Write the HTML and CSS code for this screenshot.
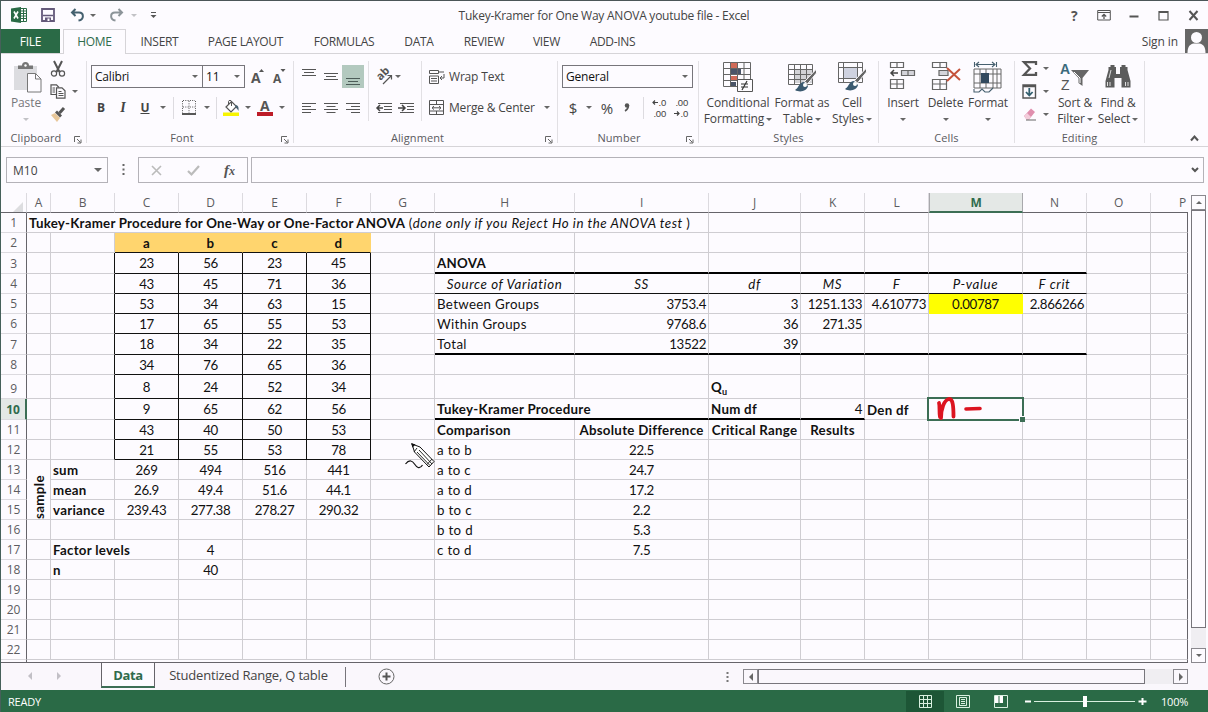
FILE: index.html
```html
<!DOCTYPE html>
<html lang="en">
<head>
<meta charset="utf-8">
<title>Tukey-Kramer for One Way ANOVA youtube file - Excel</title>
<link rel="stylesheet" href="styles.css">
</head>
<body>
<div class="app">
  <header class="titlebar">
    <div class="qat">
      <svg class="logo" width="16" height="16" viewBox="0 0 16 16"><path d="M9 1.5h6.5v13H9z" fill="#fff" stroke="#2a6a46"/><path d="M10 4h5M10 6.5h5M10 9h5M10 11.500h5M12.500 2v12" stroke="#2a6a46"/><path d="M0 1.500 10 0v16L0 14.500z" fill="#2a6a46"/><path d="m3 4.500 4 7m0-7-4 7" stroke="#fff" stroke-width="1.600"/></svg>
      <svg class="save" width="14" height="14" viewBox="0 0 14 14"><path d="M1 1h12v12H1z" fill="none" stroke="#64597a" stroke-width="1.800"/><path d="M2 7.500h10" stroke="#64597a" stroke-width="1.500"/><path d="M4 9.500h6V13H4z" fill="#64597a"/><path d="M6.500 10.500h2V13h-2z" fill="#fff"/></svg>
      <svg class="undo" width="15" height="14" viewBox="0 0 15 14"><path d="M5.500 1 2 4.500 5.500 8M2 4.500h7c5 0 5.500 7-.5 8" fill="none" stroke="#44606f" stroke-width="2"/></svg>
      <i class="caret"></i>
      <svg class="redo" width="15" height="14" viewBox="0 0 15 14"><path d="M9.500 1 13 4.500 9.500 8M13 4.500H6c-5 0-5.500 7 .5 8" fill="none" stroke="#8c9499" stroke-width="2"/></svg>
      <i class="caret pale"></i>
      <svg class="more" width="7" height="8" viewBox="0 0 7 8"><path d="M1 1.500h5" stroke="#555"/><path d="M.5 4h6l-3 3z" fill="#555"/></svg>
    </div>
    <div class="doc">Tukey-Kramer for One Way ANOVA youtube file - Excel</div>
    <div class="win">
      <b class="help">?</b>
      <svg width="14" height="12" viewBox="0 0 14 12"><path d="M.7 1.500h12.600v9.500H.7zM1 3.500h12" fill="none" stroke="#555"/><path d="M7 10V5.500M4.800 7.500 7 5.300l2.200 2.200" fill="none" stroke="#555" stroke-width="1.300"/></svg>
      <svg width="10" height="12" viewBox="0 0 10 12"><path d="M.5 7.500h9" stroke="#555" stroke-width="2"/></svg>
      <svg width="11" height="11" viewBox="0 0 11 11"><path d="M1 1.500h9v8.500H1zM1 2.500h9" fill="none" stroke="#555" stroke-width="1.200"/></svg>
      <svg width="11" height="11" viewBox="0 0 11 11"><path d="m1.500 1 8 9m0-9-8 9" stroke="#555" stroke-width="2"/></svg>
    </div>
  </header>

  <nav class="tabs">
    <span class="file">FILE</span><span class="on">HOME</span><span class="t-ins">INSERT</span><span class="t-page">PAGE LAYOUT</span><span class="t-form">FORMULAS</span><span class="t-data">DATA</span><span class="t-rev">REVIEW</span><span class="t-view">VIEW</span><span class="t-add">ADD-INS</span>
    <span class="signin">Sign in</span>
    <svg class="avatar" width="23" height="24" viewBox="0 0 23 24"><path d="M0 0h23v24H0z" fill="#666"/><circle cx="11.500" cy="8.500" r="5.500" fill="#fdfbff"/><path d="M2.500 24c0-7 3-9 6-9.500h6c3 .5 6 2.500 6 9.500z" fill="#fdfbff"/></svg>
  </nav>

  <section class="ribbon">
    <div class="group g-clip">
      <div class="body">
        <div class="big paste">
          <svg width="30" height="32" viewBox="0 0 30 32"><path d="M1 4h23v24H1z" fill="#dcdce0"/><path d="M5 7h15V3.500h-4a3.500 3.500 0 0 0-7 0H5z" fill="#777"/><circle cx="12.500" cy="3.500" r="1.200" fill="#fff"/><path d="M14.500 11.500h8l5.500 5.500v13H14.500z" fill="#fdfbff" stroke="#777"/><path d="M22.500 11.500V17H28" fill="none" stroke="#777"/></svg>
          <span class="muted">Paste</span><i class="caret pale"></i>
        </div>
        <div class="small-col">
          <div><svg width="16" height="16" viewBox="0 0 16 16"><path d="m4 0 5.500 11M12 0 6.500 11" stroke="#555" stroke-width="2"/><circle cx="4" cy="12.500" r="2.600" fill="none" stroke="#555" stroke-width="1.200"/><circle cx="12" cy="12.500" r="2.600" fill="none" stroke="#555" stroke-width="1.200"/></svg></div>
          <div><svg width="16" height="15" viewBox="0 0 16 15"><path d="M6 10.500H1V.8h5.500L9 3.500" fill="none" stroke="#555" stroke-width="1.200"/><path d="M6.500 3.800h5.500l3 3v7.400H6.500z" fill="#fdfbff" stroke="#555" stroke-width="1.200"/><path d="M2.500 4H5M2.500 6H5M2.500 8H5M8.500 7.500h3M8.500 9.500h5M8.500 11.500h5" stroke="#555"/></svg><i class="caret"></i></div>
          <div><svg width="16" height="16" viewBox="0 0 16 16"><path d="m1 8 4-2 5 5-3 4z" fill="#e8c79a"/><path d="m5 5.500 2-2 5 5-2 2z" fill="#555"/><path d="m9.500 6 4.500-5" stroke="#555" stroke-width="3"/></svg></div>
        </div>
      </div>
      <div class="label"><span>Clipboard</span><svg class="launch" width="8" height="8" viewBox="0 0 8 8"><path d="M.5 6V.5H6M3 3l3.500 3.500M7 3.500V7H3.500" fill="none" stroke="#666"/></svg></div>
    </div>

    <div class="group g-font">
      <div class="body rows">
        <div class="row"><div class="combo c-name"><span>Calibri</span><i class="caret"></i></div><div class="combo c-size"><span>11</span><i class="caret"></i></div>
          <svg class="grow" width="16" height="18" viewBox="0 0 16 18"><text x="0" y="15" class="gl">A</text><path d="m8 4 2.500-3L13 4z" fill="#555"/></svg>
          <svg class="shrink" width="16" height="18" viewBox="0 0 16 18"><text x="1" y="15" class="gs">A</text><path d="m8.500 1 2.500 3 2.500-3z" fill="#555"/></svg>
        </div>
        <div class="row">
          <b class="w22 bold">B</b><b class="w22 ital">I</b><b class="w22 und">U</b><span class="w14"><i class="caret"></i></span><i class="sep"></i>
          <span class="w26"><svg width="14" height="15" viewBox="0 0 14 15"><path d="M1 .5h12M1 7h12M.5 1v12M7 1v12M13.500 1v12" stroke="#555" stroke-dasharray="1 1.300"/><path d="M0 14h14" stroke="#444" stroke-width="1.800"/></svg></span>
          <span class="w10"><i class="caret"></i></span><i class="sep s2"></i>
          <span class="w24"><svg width="17" height="16" viewBox="0 0 17 16"><path d="M0 12.500h16V16H0z" fill="#f7f400"/><path d="m3 7 5.500-5.500 5 5L8 12z" fill="#fff" stroke="#555" stroke-width="1.200"/><path d="M5.500 4V1.500c0-1.500 3-1.500 3 0V6" fill="none" stroke="#555"/><path d="M12 5c3 0 4 2 3.500 6-1-2-2-3-3-3.500z" fill="#47606f"/></svg></span>
          <span class="w10"><i class="caret"></i></span>
          <span class="w24"><svg width="17" height="16" viewBox="0 0 17 16"><text x="3" y="11" class="gl">A</text><path d="M0 12h16v4H0z" fill="#bd1c28"/></svg></span>
          <span class="w10"><i class="caret"></i></span>
        </div>
      </div>
      <div class="label"><span>Font</span><svg class="launch" width="8" height="8" viewBox="0 0 8 8"><path d="M.5 6V.5H6M3 3l3.500 3.500M7 3.500V7H3.500" fill="none" stroke="#666"/></svg></div>
    </div>

    <div class="group g-align">
      <div class="body">
        <div class="al-left">
          <div class="row">
            <span class="w22"><svg width="14" height="22" viewBox="0 0 14 22"><path d="M0 3.500h14M2 6.500h10M0 9.500h14" stroke="#555"/></svg></span>
            <span class="w22"><svg width="14" height="22" viewBox="0 0 14 22"><path d="M0 7.500h14M2 10.500h10M0 13.500h14" stroke="#555"/></svg></span>
            <span class="w22 active"><svg width="14" height="22" viewBox="0 0 14 22"><path d="M0 12.500h14M2 15.500h10M0 18.500h14" stroke="#4c5c58"/></svg></span>
          </div>
          <div class="row">
            <span class="w22"><svg width="14" height="12" viewBox="0 0 14 12"><path d="M0 1.500h14M0 4.500h9M0 7.500h14M0 10.500h9" stroke="#555"/></svg></span>
            <span class="w22"><svg width="14" height="12" viewBox="0 0 14 12"><path d="M0 1.500h14M2.500 4.500h9M0 7.500h14M2.500 10.500h9" stroke="#555"/></svg></span>
            <span class="w22"><svg width="14" height="12" viewBox="0 0 14 12"><path d="M0 1.500h14M5 4.500h9M0 7.500h14M5 10.500h9" stroke="#555"/></svg></span>
          </div>
        </div>
        <div class="al-mid">
          <div class="row">
            <svg width="16" height="18" viewBox="0 0 16 18"><text class="ab" transform="translate(4.500 13) rotate(-45)">ab</text><path d="m7 16 8-8M11.500 7.500h4v4" fill="none" stroke="#555" stroke-width="1.200"/></svg><i class="caret"></i>
          </div>
          <div class="row in">
            <svg width="16" height="12" viewBox="0 0 16 12"><path d="M2 1.500h14M8 4.500h8M8 7.500h8M2 10.500h14" stroke="#555"/><path d="M7 6H1.500M4 3 1 6l3 3" fill="none" stroke="#444" stroke-width="1.500"/></svg>
            <svg width="16" height="12" viewBox="0 0 16 12"><path d="M2 1.500h14M9 4.500h7M9 7.500h7M2 10.500h14" stroke="#555"/><path d="M0 6h6.500M4 3l3 3-3 3" fill="none" stroke="#444" stroke-width="1.500"/></svg>
          </div>
        </div>
        <div class="al-right">
          <div class="row"><svg width="16" height="16" viewBox="0 0 16 16"><path d="M.5 1.500h9v3h-9zM10 3h5M.5 7h9v7.500h-9zM2 9.500h6M2 12h6M15 5v4h-3.500M13 7l-2 2 2 2" fill="none" stroke="#555"/></svg><span>Wrap Text</span></div>
          <div class="row"><svg width="16" height="16" viewBox="0 0 16 16"><path d="M.5.500h14v14H.5zM.5 4.500h14M.5 11h14M7.500.500v4M7.500 11v3.500M3 7.800h9M5 6 3 7.800l2 1.800M10 6l2 1.800-2 1.800" fill="none" stroke="#555"/></svg><span class="merge">Merge &amp; Center</span><i class="caret"></i></div>
        </div>
      </div>
      <div class="label"><span>Alignment</span><svg class="launch" width="8" height="8" viewBox="0 0 8 8"><path d="M.5 6V.5H6M3 3l3.500 3.500M7 3.500V7H3.500" fill="none" stroke="#666"/></svg></div>
    </div>

    <div class="group g-num">
      <div class="body rows">
        <div class="row"><div class="combo c-num"><span>General</span><i class="caret"></i></div></div>
        <div class="row">
          <span class="w22 sym">$</span><span class="w10"><i class="caret"></i></span><span class="w26 sym">%</span><span class="w14"><svg width="6" height="9" viewBox="0 0 6 9"><circle cx="3" cy="2.500" r="2.200" fill="#555"/><path d="M4.500 2.500C4.500 5 3.500 6.500 1 8" fill="none" stroke="#555" stroke-width="1.500"/></svg></span><i class="sep s3"></i>
          <span class="dec"><span><svg width="6" height="5" viewBox="0 0 6 5"><path d="M6 2.500H1M3 .5l-2 2 2 2" fill="none" stroke="#444" stroke-width="1.200"/></svg>.0</span><span>.00</span></span><span class="dec"><span>.00</span><span><svg width="6" height="5" viewBox="0 0 6 5"><path d="M0 2.500h5M3 .5l2 2-2 2" fill="none" stroke="#444" stroke-width="1.200"/></svg>.0</span></span>
        </div>
      </div>
      <div class="label"><span>Number</span><svg class="launch" width="8" height="8" viewBox="0 0 8 8"><path d="M.5 6V.5H6M3 3l3.500 3.500M7 3.500V7H3.500" fill="none" stroke="#666"/></svg></div>
    </div>

    <div class="group g-styles">
      <div class="body">
        <div class="big b-cond">
          <svg width="30" height="32" viewBox="0 0 30 32"><path d="M8 1h6v5H8zM8 14h7v5H8z" fill="#d06a58"/><path d="M8 7h10v6H8zM8 20h5v5H8z" fill="#4a5468"/><path d="M.5.500h27v24H.5zM.5 6.500h27M.5 12.500h27M.5 18.500h27M7.500.500v24M14.500.500v24M21 .5v24" fill="none" stroke="#666"/><path d="M14.500 17.500h15v12h-15z" fill="#fdfbff" stroke="#555"/><path d="M18 22h7M18 25h7M24 19l-5 9" stroke="#333" stroke-width="1.200"/></svg>
          <span>Conditional</span><span>Formatting <i class="caret"></i></span>
        </div>
        <div class="big b-fmt">
          <svg width="30" height="32" viewBox="0 0 30 32"><path d="M8 8h17v13H8z" fill="#d2d2d6"/><path d="M1.500 2.500h24v20h-24zM1.500 7.500h24M1.500 12.500h24M1.500 17.500h24M7.500 2.500v20M13.500 2.500v20M19.500 2.500v20" fill="none" stroke="#666"/><path d="m29.500 7-12 12.500 3 2.500 9-11z" fill="#666" stroke="#fdfbff"/><path d="M17 20c-5 0-5 6-9 8 5 3 12 1 13-4z" fill="#3b5a70"/><circle cx="18" cy="23" r="2" fill="#fff"/></svg>
          <span>Format as</span><span>Table <i class="caret"></i></span>
        </div>
        <div class="big b-cell">
          <svg width="30" height="32" viewBox="0 0 30 32"><path d="M6 6h14v10H6z" fill="#cfd2e0"/><path d="M1.500.500h24v20h-24zM1.500 5.500h24M1.500 16.500h24M6.500.500v20M20.500.500v20" fill="none" stroke="#666"/><path d="m29.500 6-12 12.500 3 2.500 9-11z" fill="#666" stroke="#fdfbff"/><path d="M17 19c-5 0-5 6-9 8 5 3 12 1 13-4z" fill="#3b5a70"/><circle cx="18" cy="22" r="2" fill="#fff"/></svg>
          <span>Cell</span><span>Styles <i class="caret"></i></span>
        </div>
      </div>
      <div class="label"><span>Styles</span></div>
    </div>

    <div class="group g-cells">
      <div class="body">
        <div class="big b-ins">
          <svg width="30" height="32" viewBox="0 0 30 32"><path d="M13 9h13v5H13z" fill="#d4d4da"/><path d="M2.500.500h13v5h-13zM9 .5v5M13.500 8.500h13v5h-13zM20 8.500v5M2.500 17.500h13v9h-13zM9 17.500v9M2.500 22h13" fill="none" stroke="#666" stroke-width="1.200"/><path d="M10 11H3.500M6 8l-3 3 3 3" fill="none" stroke="#444" stroke-width="1.500"/></svg>
          <span>Insert</span><i class="caret"></i>
        </div>
        <div class="big b-del">
          <svg width="30" height="32" viewBox="0 0 30 32"><path d="M8 9h9v5H8z" fill="#d4d4da"/><path d="M1.500.500h14v5h-14zM9 .5v5M8 8.500h9v5H8zM1.500 17.500h14v10h-14zM9 17.500v10M1.500 22h14" fill="none" stroke="#666" stroke-width="1.200"/><path d="m16 6 13 12M29 7 16 19" stroke="#c5533c" stroke-width="2"/></svg>
          <span>Delete</span><i class="caret"></i>
        </div>
        <div class="big b-format">
          <svg width="30" height="32" viewBox="0 0 30 32"><path d="M1 7h27v19H1zM1 12h27M1 21h27M7 7v19M20 7v19M24 7v19M13 7v19" fill="none" stroke="#666"/><path d="M8 11h8v10H8z" fill="#33495e"/><path d="M1.500 0v5M23.500 0v5M3 2.500h19M6 0 3 2.500 6 5M19 0l3 2.500L19 5M1 27v3h5l3-3 3 3h4l4-4" fill="none" stroke="#47606f" stroke-width="1.100"/></svg>
          <span>Format</span><i class="caret"></i>
        </div>
      </div>
      <div class="label"><span>Cells</span></div>
    </div>

    <div class="group g-edit">
      <div class="body">
        <div class="small-col ed">
          <div><svg width="15" height="15" viewBox="0 0 15 15"><path d="M14 4V1.200H2L8 7.500 2 13.800h12V11" fill="none" stroke="#555" stroke-width="2.300"/></svg><i class="caret"></i></div>
          <div><svg width="15" height="15" viewBox="0 0 15 15"><path d="M1 1h12.500v13H1zM1 2.500h12.500" fill="none" stroke="#555" stroke-width="1.400"/><path d="M7.300 4v7M4 8l3.300 3.500L10.600 8" fill="none" stroke="#33606f" stroke-width="1.800"/></svg><i class="caret"></i></div>
          <div><svg width="15" height="15" viewBox="0 0 15 15"><path d="m2 9 7-7.500 4 3.500-6 7.500H4.500z" fill="#e08fae"/><path d="m2 9 3-3 4 4-2 2.500H4.500z" fill="#f3cddb"/><path d="M4 13h10" stroke="#666"/></svg><i class="caret"></i></div>
        </div>
        <div class="big b-sort">
          <svg width="30" height="32" viewBox="0 0 30 32"><text x="0" y="12" class="sa">A</text><text x="1" y="28" class="sz">Z</text><path d="M11 8h18l-6.500 8v8l-4-3v-5z" fill="#666"/><path d="m14 10 6 6v5" fill="none" stroke="#fff"/></svg>
          <span>Sort &amp;</span><span>Filter <i class="caret"></i></span>
        </div>
        <div class="big b-find">
          <svg width="30" height="32" viewBox="0 0 30 32"><path d="M5.500 8V5h2V3h4v2h1.500v7h4V5h1.500V3h4v2h2v3l3 11v6.500h-9V16h-7v9.500h-9V19z" fill="#5c5c5c"/><path d="M4.500 20v4M7 20v4M22.500 20v4M25 20v4M8 8l-2 8" stroke="#fff" stroke-width=".8"/></svg>
          <span>Find &amp;</span><span>Select <i class="caret"></i></span>
        </div>
      </div>
      <div class="label"><span>Editing</span></div>
    </div>
    <svg class="collapse" width="9" height="7" viewBox="0 0 9 7"><path d="m1 5.500 3.500-4 3.500 4" fill="none" stroke="#555" stroke-width="2"/></svg>
  </section>

  <section class="fbar">
    <div class="namebox"><span>M10</span><i class="caret"></i></div>
    <svg class="dots" width="3" height="14" viewBox="0 0 3 14"><path d="M1.500 1v12" stroke="#666" stroke-width="2" stroke-dasharray="2 2.500"/></svg>
    <div class="fx">
      <svg width="11" height="11" viewBox="0 0 11 11"><path d="m1 1 9 9m0-9-9 9" stroke="#bbb" stroke-width="1.600"/></svg>
      <svg width="13" height="11" viewBox="0 0 13 11"><path d="m1 6 3.500 3.500L12 1" fill="none" stroke="#bbb" stroke-width="2.200"/></svg>
      <span class="fn">f<small>x</small></span>
    </div>
    <div class="formula"><svg width="8" height="6" viewBox="0 0 8 6"><path d="m1 1 3 3 3-3" fill="none" stroke="#555" stroke-width="2"/></svg></div>
  </section>

  <main class="work">
    <div class="sheet">
      <table>
        <colgroup><col class="k26"><col class="k24"><col class="k64"><col class="k64"><col class="k64"><col class="k64"><col class="k64"><col class="k64"><col class="k140"><col class="k134"><col class="k92"><col class="k64"><col class="k64"><col class="k94"><col class="k64"><col class="k64"><col class="k37"></colgroup>
        <tr class="cols"><th class="corner"><svg width="10" height="10" viewBox="0 0 10 10"><path d="M10 0v10H0z" fill="#dddde0"/></svg></th><th>A</th><th>B</th><th>C</th><th>D</th><th>E</th><th>F</th><th>G</th><th>H</th><th>I</th><th>J</th><th>K</th><th>L</th><th class="sel">M</th><th>N</th><th>O</th><th class="last">P</th></tr>
        <tr><th>1</th><td colspan="9" class="title"><b>Tukey-Kramer Procedure for One-Way or One-Factor ANOVA</b> (<i>done only if you Reject Ho in the ANOVA test </i>)</td><td></td><td></td><td></td><td></td><td></td><td></td><td></td></tr>
        <tr><th>2</th><td></td><td></td><td class="hd">a</td><td class="hd">b</td><td class="hd">c</td><td class="hd">d</td><td></td><td></td><td></td><td></td><td></td><td></td><td></td><td></td><td></td><td></td></tr>
        <tr class="h21"><th>3</th><td></td><td class="e"></td><td class="d">23</td><td class="d">56</td><td class="d">23</td><td class="d">45</td><td></td><td class="b u2">ANOVA</td><td class="u2"></td><td class="u2"></td><td class="u2"></td><td class="u2"></td><td class="u2"></td><td class="u2"></td><td></td><td></td></tr>
        <tr><th>4</th><td></td><td class="e"></td><td class="d">43</td><td class="d">45</td><td class="d">71</td><td class="d">36</td><td></td><td class="i u1">Source of Variation</td><td class="i u1">SS</td><td class="i u1">df</td><td class="i u1">MS</td><td class="i u1">F</td><td class="i u1">P-value</td><td class="i u1">F crit</td><td></td><td></td></tr>
        <tr><th>5</th><td></td><td class="e"></td><td class="d">53</td><td class="d">34</td><td class="d">63</td><td class="d">15</td><td></td><td>Between Groups</td><td class="n">3753.4</td><td class="n">3</td><td class="n">1251.133</td><td class="n">4.610773</td><td class="c hot">0.00787</td><td class="n">2.866266</td><td></td><td></td></tr>
        <tr><th>6</th><td></td><td class="e"></td><td class="d">17</td><td class="d">65</td><td class="d">55</td><td class="d">53</td><td></td><td>Within Groups</td><td class="n">9768.6</td><td class="n">36</td><td class="n">271.35</td><td></td><td></td><td></td><td></td><td></td></tr>
        <tr class="h21"><th>7</th><td></td><td class="e"></td><td class="d">18</td><td class="d">34</td><td class="d">22</td><td class="d">35</td><td></td><td class="u2">Total</td><td class="n u2">13522</td><td class="n u2">39</td><td class="u2"></td><td class="u2"></td><td class="u2"></td><td class="u2"></td><td></td><td></td></tr>
        <tr><th>8</th><td></td><td class="e"></td><td class="d">34</td><td class="d">76</td><td class="d">65</td><td class="d">36</td><td></td><td></td><td></td><td></td><td></td><td></td><td></td><td></td><td></td><td></td></tr>
        <tr class="h24"><th>9</th><td></td><td class="e"></td><td class="d">8</td><td class="d">24</td><td class="d">52</td><td class="d">34</td><td></td><td></td><td></td><td class="b">Q<sub>u</sub></td><td></td><td></td><td></td><td></td><td></td><td></td></tr>
        <tr class="h21"><th class="sel">10</th><td></td><td class="e"></td><td class="d">9</td><td class="d">65</td><td class="d">62</td><td class="d">56</td><td></td><td colspan="2" class="b u2">Tukey-Kramer Procedure</td><td class="b u2">Num df</td><td class="n u2">4</td><td class="b">Den df</td><td class="cur"><div class="cursor"><i></i></div></td><td></td><td></td><td></td></tr>
        <tr><th>11</th><td></td><td class="e"></td><td class="d">43</td><td class="d">40</td><td class="d">50</td><td class="d">53</td><td></td><td class="b">Comparison</td><td class="bc">Absolute Difference</td><td class="bc">Critical Range</td><td class="bc">Results</td><td></td><td></td><td></td><td></td><td></td></tr>
        <tr><th>12</th><td></td><td class="e"></td><td class="d">21</td><td class="d">55</td><td class="d">53</td><td class="d">78</td><td></td><td>a to b</td><td class="c">22.5</td><td></td><td></td><td></td><td></td><td></td><td></td><td></td></tr>
        <tr><th>13</th><td rowspan="3" class="vert"><span>sample</span></td><td class="b">sum</td><td class="c">269</td><td class="c">494</td><td class="c">516</td><td class="c">441</td><td></td><td>a to c</td><td class="c">24.7</td><td></td><td></td><td></td><td></td><td></td><td></td><td></td></tr>
        <tr><th>14</th><td class="b">mean</td><td class="c">26.9</td><td class="c">49.4</td><td class="c">51.6</td><td class="c">44.1</td><td></td><td>a to d</td><td class="c">17.2</td><td></td><td></td><td></td><td></td><td></td><td></td><td></td></tr>
        <tr><th>15</th><td class="b">variance</td><td class="c">239.43</td><td class="c">277.38</td><td class="c">278.27</td><td class="c">290.32</td><td></td><td>b to c</td><td class="c">2.2</td><td></td><td></td><td></td><td></td><td></td><td></td><td></td></tr>
        <tr><th>16</th><td></td><td></td><td></td><td></td><td></td><td></td><td></td><td>b to d</td><td class="c">5.3</td><td></td><td></td><td></td><td></td><td></td><td></td><td></td></tr>
        <tr><th>17</th><td></td><td colspan="2" class="b">Factor levels</td><td class="c">4</td><td></td><td></td><td></td><td>c to d</td><td class="c">7.5</td><td></td><td></td><td></td><td></td><td></td><td></td><td></td></tr>
        <tr><th>18</th><td></td><td class="b">n</td><td></td><td class="c">40</td><td></td><td></td><td></td><td></td><td></td><td></td><td></td><td></td><td></td><td></td><td></td><td></td></tr>
        <tr><th>19</th><td></td><td></td><td></td><td></td><td></td><td></td><td></td><td></td><td></td><td></td><td></td><td></td><td></td><td></td><td></td><td></td></tr>
        <tr><th>20</th><td></td><td></td><td></td><td></td><td></td><td></td><td></td><td></td><td></td><td></td><td></td><td></td><td></td><td></td><td></td><td></td></tr>
        <tr><th>21</th><td></td><td></td><td></td><td></td><td></td><td></td><td></td><td></td><td></td><td></td><td></td><td></td><td></td><td></td><td></td><td></td></tr>
        <tr><th>22</th><td></td><td></td><td></td><td></td><td></td><td></td><td></td><td></td><td></td><td></td><td></td><td></td><td></td><td></td><td></td><td></td></tr>
      </table>
      <svg class="ink" width="50" height="30" viewBox="0 0 50 30"><path d="M4 8c1 3 0 8 1 14M6 23C6 14 9 5 14 4c4-.5 4.500 8 4.500 17.500" fill="none" stroke="#dc1420" stroke-width="3.800" stroke-linecap="round"/><path d="M31 14 45 13.500" stroke="#dc1420" stroke-width="3.600" stroke-linecap="round"/></svg>
      <svg class="pen" width="32" height="28" viewBox="0 0 32 28"><path d="m7 1 8 3 14 14.500-5 5.500L9.500 9z" fill="#fff" stroke="#111"/><path d="m12 5-3 4M14 7l13 14M12 9l13 13.500M27 16l-5 5.500" stroke="#111" stroke-width=".9" fill="none"/><path d="m6 0 4.500 1.500-3 3z" fill="#111"/><path d="M.5 21c4-5 7-3 9 0s5 6 8 1" fill="none" stroke="#111" stroke-width="1.200"/></svg>
    </div>
    <div class="vscroll">
      <div class="sb"><i class="up"></i></div><div class="thumb"></div><div class="track"></div><div class="sb"><i class="caret"></i></div>
    </div>
  </main>

  <footer class="sheets">
    <div class="nav"><i class="lt"></i><i class="rt"></i></div>
    <div class="stab on">Data</div>
    <div class="stab other">Studentized Range, Q table</div>
    <svg class="plus" width="17" height="17" viewBox="0 0 17 17"><circle cx="8.500" cy="8.500" r="7.500" fill="none" stroke="#666"/><path d="M4.500 8.500h8M8.500 4.500v8" stroke="#555" stroke-width="2"/></svg>
    <svg class="grip" width="3" height="12" viewBox="0 0 3 12"><path d="M1.500 1v10" stroke="#777" stroke-width="2" stroke-dasharray="2 2"/></svg>
    <div class="hscroll"><div class="sb"><i class="lt"></i></div><div class="hthumb"></div><div class="htrack"></div><div class="sb"><i class="rt"></i></div></div>
  </footer>

  <div class="status">
    <span class="ready">READY</span>
    <span class="view cur-view"><svg width="13" height="13" viewBox="0 0 13 13"><path d="M.5.500h12v12H.5zM.5 4.500h12M.5 8.500h12M4.500.500v12M8.500.500v12" fill="none" stroke="#d9f0e0"/></svg></span>
    <span class="view"><svg width="14" height="13" viewBox="0 0 14 13"><path d="M.5.500h13v12H.5zM3.500 2.500h7v8h-7zM5 4.500h4M5 6.500h4M5 8.500h4" fill="none" stroke="#d9f0e0"/></svg></span>
    <span class="view"><svg width="14" height="13" viewBox="0 0 14 13"><path d="M.5.500h13v12H.5z" fill="none" stroke="#d9f0e0"/><path d="M1 1h3.500v7H1zM5.500 1H9v7H5.500z" fill="#fff"/></svg></span>
    <svg class="zoom" width="119" height="13" viewBox="0 0 119 13"><path d="M0 6.500h6M113.500 6.500h8M117.500 3v7" stroke="#fff" stroke-width="2"/><path d="M9 6.500h101" stroke="#d9f0e0"/><path d="M58 1h4v11h-4z" fill="#fff"/></svg>
    <span class="pct">100%</span>
  </div>
</div>
</body>
</html>
```
FILE: styles.css
```css
* { box-sizing: border-box; }
body { margin: 0; background: #fdfbff; font-family: "Open Sans", "Noto Sans", sans-serif; font-size: 12px; color: #444; }
svg { display: block; flex: none; overflow: visible; }
.app { width: 1208px; height: 712px; overflow: hidden; display: flex; flex-direction: column; border-top: 1px solid #4b5558; border-left: 1px solid #46605a; }
.caret { display: inline-block; flex: none; width: 0; height: 0; border: 3px solid transparent; border-top: 3px solid #666; border-bottom: 0; }
.caret.pale { border-top-color: #c2c2c6; }

/* title bar */
.titlebar { height: 28px; flex: none; display: flex; align-items: center; }
.qat { width: 378px; display: flex; align-items: center; padding-left: 10px; }
.save { margin-left: 14px; }
.undo { margin-left: 15px; }
.undo + .caret { margin-left: 5px; }
.redo { margin-left: 13px; }
.redo + .caret { margin-left: 7px; }
.more { margin-left: 13px; }
.doc { width: 450px; text-align: center; letter-spacing: -0.24px; color: #444; }
.win { margin-left: auto; width: 137px; display: flex; align-items: center; justify-content: space-between; padding-right: 9px; }
.help { font-size: 14px; color: #555; }

/* ribbon tabs */
.tabs { height: 25px; flex: none; display: flex; border-bottom: 1px solid #d6d4d8; }
.tabs span { line-height: 25px; text-align: center; letter-spacing: -0.3px; white-space: nowrap; }
.tabs .file { width: 59px; background: #2a6a46; color: #fff; }
.tabs .on { width: 63px; height: 25px; margin-left: 3px; color: #2f6b4c; background: #fdfbff; border: 1px solid #d6d4d8; border-bottom: 0; line-height: 24px; }
.t-ins { width: 67px; }
.t-page { width: 105px; }
.t-form { width: 92px; }
.t-data { width: 58px; }
.t-rev { width: 72px; }
.t-view { width: 53px; }
.t-add { width: 79px; }
.tabs .signin { margin-left: auto; margin-right: 7px; letter-spacing: -0.1px; }

/* ribbon */
.ribbon { height: 93px; flex: none; display: flex; border-bottom: 1px solid #d6d4d8; padding-top: 7px; position: relative; }
.group { height: 82px; border-right: 1px solid #e2e0e4; display: flex; flex-direction: column; }
.g-clip { width: 86px; }
.g-font { width: 207px; }
.g-align { width: 264px; }
.g-num { width: 141px; }
.g-styles { width: 180px; }
.g-cells { width: 136px; }
.g-edit { width: 130px; }
.body { height: 69px; flex: none; display: flex; }
.body.rows { flex-direction: column; }
.label { height: 17px; display: flex; align-items: center; justify-content: center; position: relative; font-size: 11px; letter-spacing: 0.1px; color: #5a5a5e; padding-right: 15px; }
.g-font .label, .g-align .label { padding-right: 16px; }
.g-num .label { padding-right: 18px; }
.g-styles .label, .g-cells .label, .g-edit .label { padding-right: 0; }
.launch { position: absolute; right: 4px; top: 6px; }
.row { height: 31px; flex: none; display: flex; align-items: center; }
.w10, .w14, .w22, .w24, .w26 { flex: none; display: flex; align-items: center; justify-content: center; }
.w10 { width: 10px; }
.w14 { width: 14px; }
.w22 { width: 22px; }
.w24 { width: 24px; }
.w26 { width: 26px; }
.sep { width: 1px; height: 22px; background: #dddbe0; margin: 0 2px 0 3px; flex: none; }
.s2 { margin: 0 2px 0 4px; }
.s3 { margin: 0 4px 0 9px; }
.combo { height: 23px; border: 1px solid #77757b; display: flex; align-items: center; justify-content: space-between; padding: 0 4px 0 3px; color: #111; letter-spacing: -0.2px; }
.c-name { width: 112px; margin-left: 4px; }
.c-size { width: 43px; margin-left: -1px; }
.c-num { width: 131px; margin-left: 4px; }
.grow { margin-left: 6px; }
.shrink { margin-left: 5px; }
.gl { font: bold 14px "Open Sans", sans-serif; fill: #555; }
.gs { font: bold 12px "Open Sans", sans-serif; fill: #555; }
.ab { font: bold 11px "Open Sans", sans-serif; fill: #555; }
.bold { margin-left: 3px; }
.ital { font-family: "Liberation Serif", serif; font-style: italic; font-size: 14px; }
.und { text-decoration: underline; }

.big { display: flex; flex-direction: column; align-items: center; flex: none; line-height: 16px; letter-spacing: -0.1px; white-space: nowrap; padding-top: 1px; }
.big span { display: flex; align-items: center; gap: 2px; }
.big svg + span { margin-top: 1px; }
.big > .caret { margin-top: 7px; }
.muted { color: #77777b; }
.paste { width: 50px; }
.paste svg { margin-left: 4px; }
.small-col { display: flex; flex-direction: column; }
.small-col div { height: 23px; display: flex; align-items: center; gap: 6px; padding-bottom: 8px; }
.g-clip .small-col svg { margin-left: -1px; }
.b-cond { width: 78px; }
.b-fmt { width: 50px; }
.b-cell { width: 50px; }
.b-ins { width: 48px; }
.b-del { width: 37px; }
.b-format { width: 48px; }
.ed { margin-left: 7px; width: 33px; }
.b-sort { width: 40px; }
.b-find { width: 46px; }
.sa { font: bold 14px "Liberation Sans", sans-serif; fill: #3c6a7c; }
.sz { font: 14px "Liberation Sans", sans-serif; fill: #555; }
.al-left { width: 74px; padding-left: 4px; }
.al-mid { width: 53px; border-left: 1px solid #e2e0e4; padding-left: 7px; }
.al-mid .row { gap: 3px; }
.al-mid .in { gap: 6px; }
.al-right { border-left: 1px solid #e2e0e4; padding-left: 7px; letter-spacing: -0.18px; }
.al-right .row { gap: 4px; white-space: nowrap; }
.al-left, .al-mid, .al-right { height: 60px; }
.merge + .caret { margin-left: 5px; }
.active { background: #b3c9bf; height: 23px; }
.sym { font-size: 15px; }
.dec { width: 22px; font: 9.500px "Liberation Sans", sans-serif; display: flex; flex-direction: column; align-items: flex-end; padding-right: 4px; letter-spacing: -0.2px; white-space: nowrap; }
.dec span { display: flex; align-items: center; height: 11px; line-height: 11px; }
.g-num .row + .row { padding-left: 4px; }
.collapse { position: absolute; right: 9px; bottom: 4px; }

/* formula bar */
.fbar { height: 46px; flex: none; display: flex; align-items: center; padding: 0 4px 0 5px; }
.namebox, .fx, .formula { height: 26px; border: 1px solid #b4b2b8; display: flex; align-items: center; }
.namebox { width: 102px; justify-content: space-between; padding: 0 5px 0 6px; }
.namebox .caret { border-width: 4px 4px 0; }
.dots { margin: 0 13px 0 14px; }
.fx { width: 110px; justify-content: space-between; padding: 0 12px; }
.fn { font: italic bold 15px "Liberation Serif", serif; color: #555; line-height: 20px; }
.fn small { font-size: 12px; }
.formula { flex: 1; margin-left: 3px; justify-content: flex-end; padding-right: 4px; }

/* worksheet */
.work { height: 470px; flex: none; display: flex; }
.sheet { width: 1187px; height: 470px; overflow: hidden; position: relative; border-bottom: 1px solid #66646a; background: linear-gradient(#66646a, #66646a) 1186px 20px / 1px 460px no-repeat, linear-gradient(#66646a, #66646a) 25px 20px / 1px 460px no-repeat; }
table { table-layout: fixed; width: 1187px; border-collapse: separate; border-spacing: 0; font-family: Lato, sans-serif; font-size: 13.300px; letter-spacing: 0.33px; color: #111; }
.k24 { width: 24px; }
.k26 { width: 26px; }
.k37 { width: 37px; }
.k64 { width: 64px; }
.k92 { width: 92px; }
.k94 { width: 94px; }
.k134 { width: 134px; }
.k140 { width: 140px; }
tr { height: 20px; }
.h21 { height: 21px; }
.h24 { height: 24px; }
td, th { padding: 0 2px; border-right: 1px solid #cfcdd2; border-bottom: 1px solid #cfcdd2; line-height: 18px; white-space: nowrap; vertical-align: bottom; font-weight: normal; text-align: left; overflow: visible; }
th { color: #5c5c60; text-align: center; padding: 1px 0 0; font-family: "Open Sans", sans-serif; font-size: 12px; letter-spacing: -0.2px; border-right-color: #66646a; border-bottom-color: #dcdadf; }
td:last-child { border-right-color: #66646a; }
.cols th { border-right-color: #dcdadf; border-bottom-color: #66646a; line-height: 18px; }
.cols .corner { padding: 6px 0 0 12px; }
.cols .last { border-right: 0; text-align: right; padding-right: 2px; }
th.sel { background: #e4e8e6; color: #2f6b4c; font-weight: bold; border-right: 2px solid #3c6e55; }
.cols th.sel { border-bottom: 2px solid #3c6e55; border-right: 1px solid #a8a8ac; border-left: 1px solid #a8a8ac; line-height: 17px; }
.b, .bc { font-weight: bold; letter-spacing: 0.28px; }
.title b { letter-spacing: 0.23px; }
.title i { letter-spacing: 0.52px; }
.i { font-style: italic; text-align: center; letter-spacing: 0.6px; }
.c, .bc { text-align: center; }
.n { text-align: right; }
.n, .c, .d { letter-spacing: -0.35px; }
.hd { background: #ffd56e; border-right-color: #ffd56e; border-bottom-color: #111; font-weight: bold; text-align: center; }
.d { text-align: center; border-right-color: #111; border-bottom-color: #111; }
.e { border-right-color: #111; }
.u1 { border-bottom: 1px solid #111; }
.u2 { border-bottom: 2px solid #000; }
.h21 .d { line-height: 20px; }
.h21 .u2 { line-height: 18px; }
.h24 td { line-height: 22px; }
.hot { background: #ff0; border-color: #ff0; }
sub { font-size: 9px; line-height: 0; vertical-align: -3px; }
.vert { padding: 0; }
.vert span { display: block; writing-mode: vertical-rl; transform: rotate(180deg); font-weight: bold; line-height: 21px; letter-spacing: 0.4px; margin-left: 2px; }
.cur { position: relative; }
.cursor { position: absolute; left: -2px; top: -2px; width: 97px; height: 24px; border: 2px solid #3c6e55; }
.cursor i { position: absolute; right: -3px; bottom: -3px; width: 6px; height: 6px; background: #3c6e55; border: 1px solid #fdfbff; border-right: 0; border-bottom: 0; }
.ink { position: absolute; left: 934px; top: 202px; }
.pen { position: absolute; left: 404px; top: 250px; }
.vscroll { width: 20px; display: flex; flex-direction: column; padding: 2px 1px 0 3px; }
.sb { width: 15px; height: 15px; flex: none; border: 1px solid #8a888e; display: flex; align-items: center; justify-content: center; }
.up { border: 3px solid transparent; border-bottom: 3px solid #666; border-top: 0; }
.thumb { width: 15px; height: 418px; border: 1px solid #77757b; }
.track { width: 15px; height: 20px; background: #f0eef2; }

/* sheet tabs */
.sheets { height: 27px; flex: none; display: flex; background: #faf7fc; }
.lt, .rt { display: block; width: 0; height: 0; border: 4px solid transparent; }
.lt { border-right: 4px solid #666; border-left: 0; }
.rt { border-left: 4px solid #666; border-right: 0; }
.nav { width: 100px; display: flex; align-items: flex-start; gap: 25px; padding: 9px 0 0 27px; }
.nav .lt { border-right-color: #c2c0c6; }
.nav .rt { border-left-color: #c2c0c6; }
.stab { font-size: 13px; height: 25px; line-height: 25px; text-align: center; letter-spacing: -0.2px; white-space: nowrap; }
.stab.on { width: 54px; background: #fdfbff; border: 1px solid #66646a; border-top: 0; border-bottom: 2px solid #3c6e55; font-weight: bold; color: #2f6b4c; letter-spacing: -0.4px; }
.other { width: 191px; padding-right: 3px; height: 20px; margin-top: 4px; line-height: 17px; border-right: 1px solid #77757b; }
.plus { margin: 5px 0 0 32px; }
.grip { margin: 8px 0 0 331px; }
.hscroll { display: flex; margin: 6px 0 0 14px; }
.hthumb { width: 387px; height: 15px; border: 1px solid #77757b; }
.htrack { width: 28px; height: 15px; background: #f0eef2; }

/* status bar */
.status { height: 23px; margin-left: -1px; flex: none; background: #2a6a46; color: #fff; display: flex; align-items: center; font-size: 11px; }
.ready { width: 906px; padding-left: 8px; letter-spacing: -0.2px; }
.view { width: 38px; height: 22px; display: flex; align-items: center; justify-content: center; }
.cur-view { background: #1d5636; }
.zoom { margin-left: 5px; }
.pct { margin-left: 17px; letter-spacing: -0.2px; }
```
